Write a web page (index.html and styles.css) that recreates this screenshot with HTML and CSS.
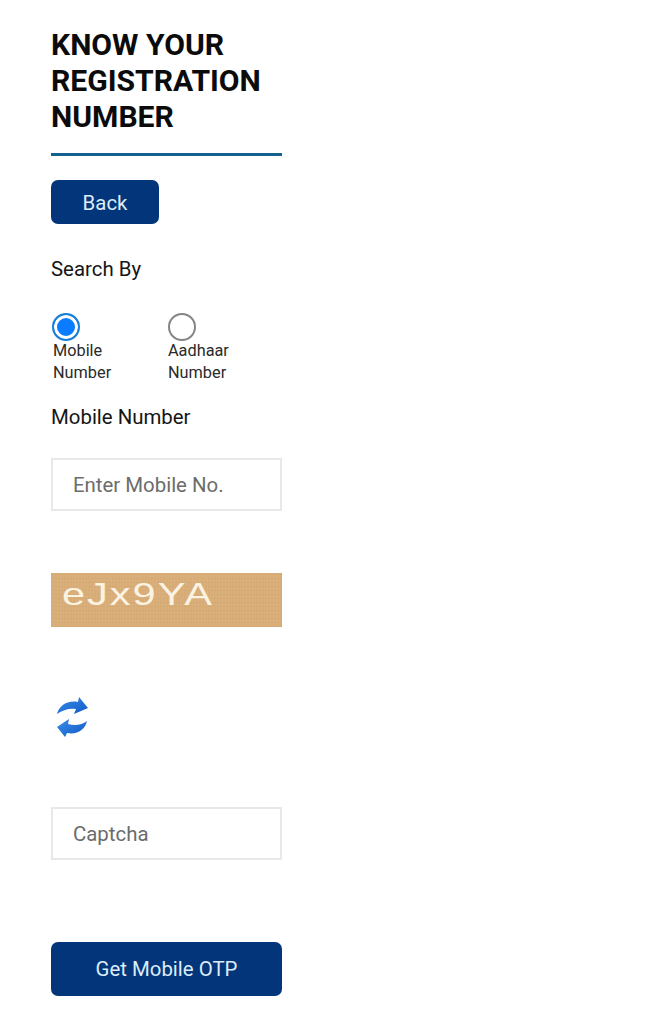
FILE: index.html
```html
<!DOCTYPE html>
<html lang="en">
<head>
    <meta charset="UTF-8">
    <meta name="viewport" content="width=device-width, initial-scale=1.0">
    <title>Know Your Registration Number</title>
    <link rel="stylesheet" href="styles.css">
</head>
<body>
    <div class="form-column">
        <h1 class="page-title">KNOW YOUR REGISTRATION NUMBER</h1>

        <button type="button" class="btn back-btn">Back</button>

        <p class="field-label search-label">Search By</p>

        <div class="radio-row">
            <label class="radio-option">
                <input type="radio" name="searchBy" checked>
                <span class="radio-mark"></span>
                <span class="radio-text">Mobile Number</span>
            </label>
            <label class="radio-option">
                <input type="radio" name="searchBy">
                <span class="radio-mark"></span>
                <span class="radio-text">Aadhaar Number</span>
            </label>
        </div>

        <label class="field-label mobile-label" for="mobile">Mobile Number</label>
        <input class="text-input mobile-input" type="text" id="mobile" placeholder="Enter Mobile No.">

        <div class="captcha-box"><span class="captcha-text">eJx9YA</span></div>

        <!-- refresh captcha -->
        <svg class="refresh-icon" viewBox="0 0 34 42" width="34" height="42">
            <defs>
                <linearGradient id="arrowBlue" x1="0" y1="0" x2="1" y2="1">
                    <stop offset="0" stop-color="#3a8ee8"/>
                    <stop offset="1" stop-color="#1159c6"/>
                </linearGradient>
            </defs>
            <path fill="url(#arrowBlue)" d="M2 18 C4 10 12 4 23 6 L24 1 L33 12 L19 18 L21 13 C14 12 8 14 2 18 Z"/>
            <path fill="url(#arrowBlue)" d="M32 25 C30 34 22 39 12 37 L10 41 L2 31 L14 23 L13 28 C20 30 27 29 32 25 Z"/>
        </svg>

        <input class="text-input captcha-input" type="text" placeholder="Captcha">

        <button type="button" class="btn otp-btn">Get Mobile OTP</button>
    </div>
</body>
</html>
```

FILE: styles.css
```css
* {
    margin: 0;
    padding: 0;
    box-sizing: border-box;
}

body {
    font-family: Roboto, 'Liberation Sans', sans-serif;
    background: #fff;
    color: #111;
    padding: 27px 0 0 51px;
}

.form-column {
    width: 231px;
    display: flex;
    flex-direction: column;
    align-items: flex-start;
}

.page-title {
    width: 100%;
    font-size: 30.1px;
    line-height: 36px;
    font-weight: 700;
    color: #0b0b0b;
    padding-bottom: 18px;
    border-bottom: 3px solid #14608e;
}

.btn {
    background: #03357a;
    color: #dcecf8;
    border: none;
    border-radius: 7px;
    font-family: inherit;
    font-size: 20.4px;
}

.back-btn {
    width: 108px;
    height: 44px;
    margin-top: 24px;
    padding-top: 2px;
}

.field-label {
    display: block;
    font-size: 20.4px;
    line-height: 24px;
    color: #151515;
}

.search-label {
    margin-top: 33px;
}

.radio-row {
    display: flex;
    margin-top: 32px;
}

.radio-option {
    width: 117px;
    display: flex;
    flex-direction: column;
    align-items: flex-start;
}

.radio-option input {
    display: none;
}

.radio-mark {
    width: 28px;
    height: 28px;
    border-radius: 50%;
    border: 2px solid #858585;
    background: #fff;
    margin-left: 1px;
}

.radio-option:last-child .radio-mark {
    margin-left: 0;
}

.radio-option input:checked + .radio-mark {
    border-color: #1a7fd8;
    background: #0a7cff;
    box-shadow: inset 0 0 0 3px #fff;
}

.radio-text {
    width: 70px;
    font-size: 16.3px;
    line-height: 22px;
    color: #2a2a2a;
    margin-left: 2px;
    margin-top: -1px;
}

.radio-option:last-child .radio-text {
    margin-left: 0;
}

.mobile-label {
    margin-top: 21px;
}

.text-input {
    width: 100%;
    height: 53px;
    border: 2px solid #e8e8e8;
    padding: 0 20px;
    font-family: inherit;
    font-size: 20.4px;
    color: #333;
    background: #fff;
}

.text-input::placeholder {
    color: #6c6c6c;
    opacity: 1;
}

.mobile-input {
    margin-top: 29px;
}

.captcha-box {
    width: 100%;
    height: 54px;
    margin-top: 62px;
    padding: 3px 0 0 11px;
    background-color: #d9ad78;
    background-image:
        repeating-linear-gradient(90deg, rgba(255, 255, 255, 0.04) 0 1px, transparent 1px 3px),
        repeating-linear-gradient(0deg, rgba(120, 80, 30, 0.04) 0 1px, transparent 1px 4px);
    color: #fbf3e2;
    font-family: 'Liberation Sans', sans-serif;
    font-size: 32px;
    line-height: 36px;
    letter-spacing: 1.5px;
}

.captcha-text {
    display: inline-block;
    transform: scaleX(1.3);
    transform-origin: left;
}

.refresh-icon {
    display: block;
    margin-top: 69px;
    margin-left: 4px;
}

.captcha-input {
    margin-top: 69px;
}

.otp-btn {
    width: 100%;
    height: 54px;
    margin-top: 82px;
}
```
